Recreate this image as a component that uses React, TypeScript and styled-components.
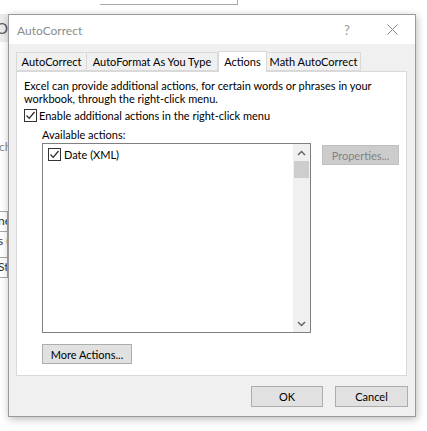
import React from 'react';
import styled, { createGlobalStyle } from 'styled-components';

const GlobalStyle = createGlobalStyle`
  html, body {
    margin: 0;
    padding: 0;
    background: #ffffff;
    font-family: Lato, "Liberation Sans", sans-serif;
    font-size: 11px;
    color: #000;
  }
`;

const Desktop = styled.div`
  position: relative;
  width: 427px;
  height: 431px;
  overflow: hidden;
  background: #fff;
  padding: 14px 0 0 8px;
  box-sizing: border-box;
`;

// fragments of the Excel window lying behind the dialog
const BehindBox = styled.div<{ $x: number; $y: number; $w: number; $h: number }>`
  position: absolute;
  left: ${p => p.$x}px;
  top: ${p => p.$y}px;
  width: ${p => p.$w}px;
  height: ${p => p.$h}px;
  box-sizing: border-box;
  border: 1px solid #a8a8a8;
  border-left: none;
  background: #fff;
  font-size: 12px;
  line-height: 18px;
  color: #333;
  white-space: nowrap;
  overflow: hidden;
  text-indent: -2px;
`;

const BehindStrip = styled.div`
  position: absolute;
  left: 0;
  top: 14px;
  width: 8px;
  height: 28px;
  background: #ececec;
  font-size: 15px;
  line-height: 28px;
  color: #555;
  overflow: hidden;
  white-space: nowrap;
  text-indent: -4px;
`;

const BehindText = styled.div`
  position: absolute;
  left: -1px;
  top: 139px;
  width: 9px;
  overflow: hidden;
  font-size: 12px;
  color: #888;
`;

const Dialog = styled.div`
  position: relative;
  width: 408px;
  height: 403px;
  box-sizing: border-box;
  border: 1px solid #9a9a9a;
  background: #f0f0f0;
  box-shadow: 1px 2px 8px rgba(0, 0, 0, 0.28);
  display: flex;
  flex-direction: column;
`;

const TitleBar = styled.div`
  height: 29px;
  background: #fff;
  display: flex;
  align-items: center;
  padding: 0 0 0 8px;
`;

const Title = styled.div`
  flex: 1;
  color: #8c8c8c;
  font-size: 12px;
  padding-top: 1px;
`;

const TitleButton = styled.div<{ $w: number }>`
  width: ${p => p.$w}px;
  height: 29px;
  display: flex;
  align-items: center;
  justify-content: center;
  color: #9a9a9a;
  font-size: 13px;
`;

const Body = styled.div`
  flex: 1;
  display: flex;
  flex-direction: column;
  padding: 7px 7px 0 7px;
`;

const TabRow = styled.div`
  display: flex;
  align-items: flex-end;
  height: 20px;
  position: relative;
  z-index: 1;
`;

const Tab = styled.div<{ $active?: boolean; $first?: boolean; $w: number }>`
  width: ${p => p.$w}px;
  height: ${p => (p.$active ? 21 : 19)}px;
  box-sizing: border-box;
  border: 1px solid #d9d9d9;
  border-bottom: ${p => (p.$active ? 'none' : '1px solid #d9d9d9')};
  border-left: ${p => (p.$first || p.$active ? '1px solid #d9d9d9' : 'none')};
  margin-bottom: ${p => (p.$active ? -1 : 0)}px;
  background: ${p => (p.$active ? '#fff' : '#f0f0f0')};
  display: flex;
  align-items: center;
  justify-content: center;
  font-size: 11px;
  padding-bottom: ${p => (p.$active ? 2 : 0)}px;
  white-space: nowrap;
`;

const Panel = styled.div`
  width: 391px;
  height: 305px;
  box-sizing: border-box;
  background: #fff;
  border: 1px solid #d9d9d9;
  padding: 7px 0 0 7px;
  display: flex;
  flex-direction: column;
`;

const Para = styled.div`
  line-height: 13px;
  white-space: nowrap;
`;

const CheckRow = styled.label`
  display: flex;
  align-items: center;
  gap: 2px;
  height: 15px;
  margin-top: 3px;
`;

const Check = styled.span`
  width: 13px;
  height: 13px;
  box-sizing: border-box;
  border: 1px solid #333;
  background: #fff;
  display: inline-flex;
  align-items: center;
  justify-content: center;
`;

const SubLabel = styled.div`
  margin: 5px 0 0 18px;
  line-height: 13px;
`;

const ListArea = styled.div`
  display: flex;
  align-items: flex-start;
  gap: 11px;
  margin: 2px 0 0 18px;
`;

const ListBox = styled.div`
  width: 269px;
  height: 190px;
  box-sizing: border-box;
  border: 1px solid #7f7f7f;
  display: flex;
`;

const ListItems = styled.div`
  flex: 1;
  padding: 3px 0 0 5px;
`;

const ListItem = styled.div`
  display: flex;
  align-items: center;
  gap: 3px;
  height: 15px;
`;

const ScrollBar = styled.div`
  width: 17px;
  background: #f0f0f0;
  display: flex;
  flex-direction: column;
`;

const ScrollArrow = styled.div`
  height: 17px;
  display: flex;
  align-items: center;
  justify-content: center;
`;

const Thumb = styled.div`
  height: 17px;
  margin: 0 1px;
  background: #cdcdcd;
`;

const Track = styled.div`
  flex: 1;
`;

const Button = styled.div<{ $w: number; $h?: number; $disabled?: boolean }>`
  width: ${p => p.$w}px;
  height: ${p => p.$h ?? 20}px;
  box-sizing: border-box;
  border: 1px solid ${p => (p.$disabled ? '#bfbfbf' : '#adadad')};
  background: ${p => (p.$disabled ? '#cccccc' : '#e1e1e1')};
  color: ${p => (p.$disabled ? '#838383' : '#000')};
  display: flex;
  align-items: center;
  justify-content: center;
  font-size: 11px;
  white-space: nowrap;
`;

const PropsSlot = styled.div`
  margin-top: 2px;
`;

const MoreRow = styled.div`
  margin: 11px 0 0 18px;
`;

const Footer = styled.div`
  display: flex;
  justify-content: flex-end;
  gap: 12px;
  padding: 10px 0 0 0;
`;

const CheckMark = () => (
  <svg width="11" height="11" viewBox="0 0 11 11">
    <path d="M1.5 5.5 L4.2 8.3 L9.5 2" fill="none" stroke="#222" strokeWidth="1.2" />
  </svg>
);

const Chevron = ({ up }: { up?: boolean }) => (
  <svg width="9" height="6" viewBox="0 0 9 6">
    <path d={up ? 'M1 5 L4.5 1.5 L8 5' : 'M1 1 L4.5 4.5 L8 1'} fill="none" stroke="#606060" strokeWidth="1.4" />
  </svg>
);

const CloseIcon = () => (
  <svg width="11" height="11" viewBox="0 0 11 11">
    <path d="M0.5 0.5 L10.5 10.5 M10.5 0.5 L0.5 10.5" stroke="#8a8a8a" strokeWidth="1" />
  </svg>
);

export default function App() {
  return (
    <Desktop>
      <GlobalStyle />
      <BehindBox $x={100} $y={-10} $w={138} $h={15} />
      <BehindStrip>Of</BehindStrip>
      <BehindText>ch</BehindText>
      <BehindBox $x={0} $y={211} $w={8} $h={21}>ne</BehindBox>
      <BehindBox $x={0} $y={231} $w={8} $h={27}>s (</BehindBox>
      <BehindBox $x={0} $y={257} $w={8} $h={21}>Sta</BehindBox>

      <Dialog>
        <TitleBar>
          <Title>AutoCorrect</Title>
          <TitleButton $w={44}>?</TitleButton>
          <TitleButton $w={46}><CloseIcon /></TitleButton>
        </TitleBar>
        <Body>
          <TabRow>
            <Tab $w={71} $first>AutoCorrect</Tab>
            <Tab $w={131}>AutoFormat As You Type</Tab>
            <Tab $w={49} $active>Actions</Tab>
            <Tab $w={94}>Math AutoCorrect</Tab>
          </TabRow>
          <Panel>
            <Para>
              Excel can provide additional actions, for certain words or phrases in your
              <br />
              workbook, through the right-click menu.
            </Para>
            <CheckRow>
              <Check><CheckMark /></Check>
              Enable additional actions in the right-click menu
            </CheckRow>
            <SubLabel>Available actions:</SubLabel>
            <ListArea>
              <ListBox>
                <ListItems>
                  <ListItem>
                    <Check><CheckMark /></Check>
                    Date (XML)
                  </ListItem>
                </ListItems>
                <ScrollBar>
                  <ScrollArrow><Chevron up /></ScrollArrow>
                  <Thumb />
                  <Track />
                  <ScrollArrow><Chevron /></ScrollArrow>
                </ScrollBar>
              </ListBox>
              <PropsSlot>
                <Button $w={77} $disabled>Properties...</Button>
              </PropsSlot>
            </ListArea>
            <MoreRow>
              <Button $w={90}>More Actions...</Button>
            </MoreRow>
          </Panel>
          <Footer>
            <Button $w={72} $h={21}>OK</Button>
            <Button $w={73} $h={21}>Cancel</Button>
          </Footer>
        </Body>
      </Dialog>
    </Desktop>
  );
}
